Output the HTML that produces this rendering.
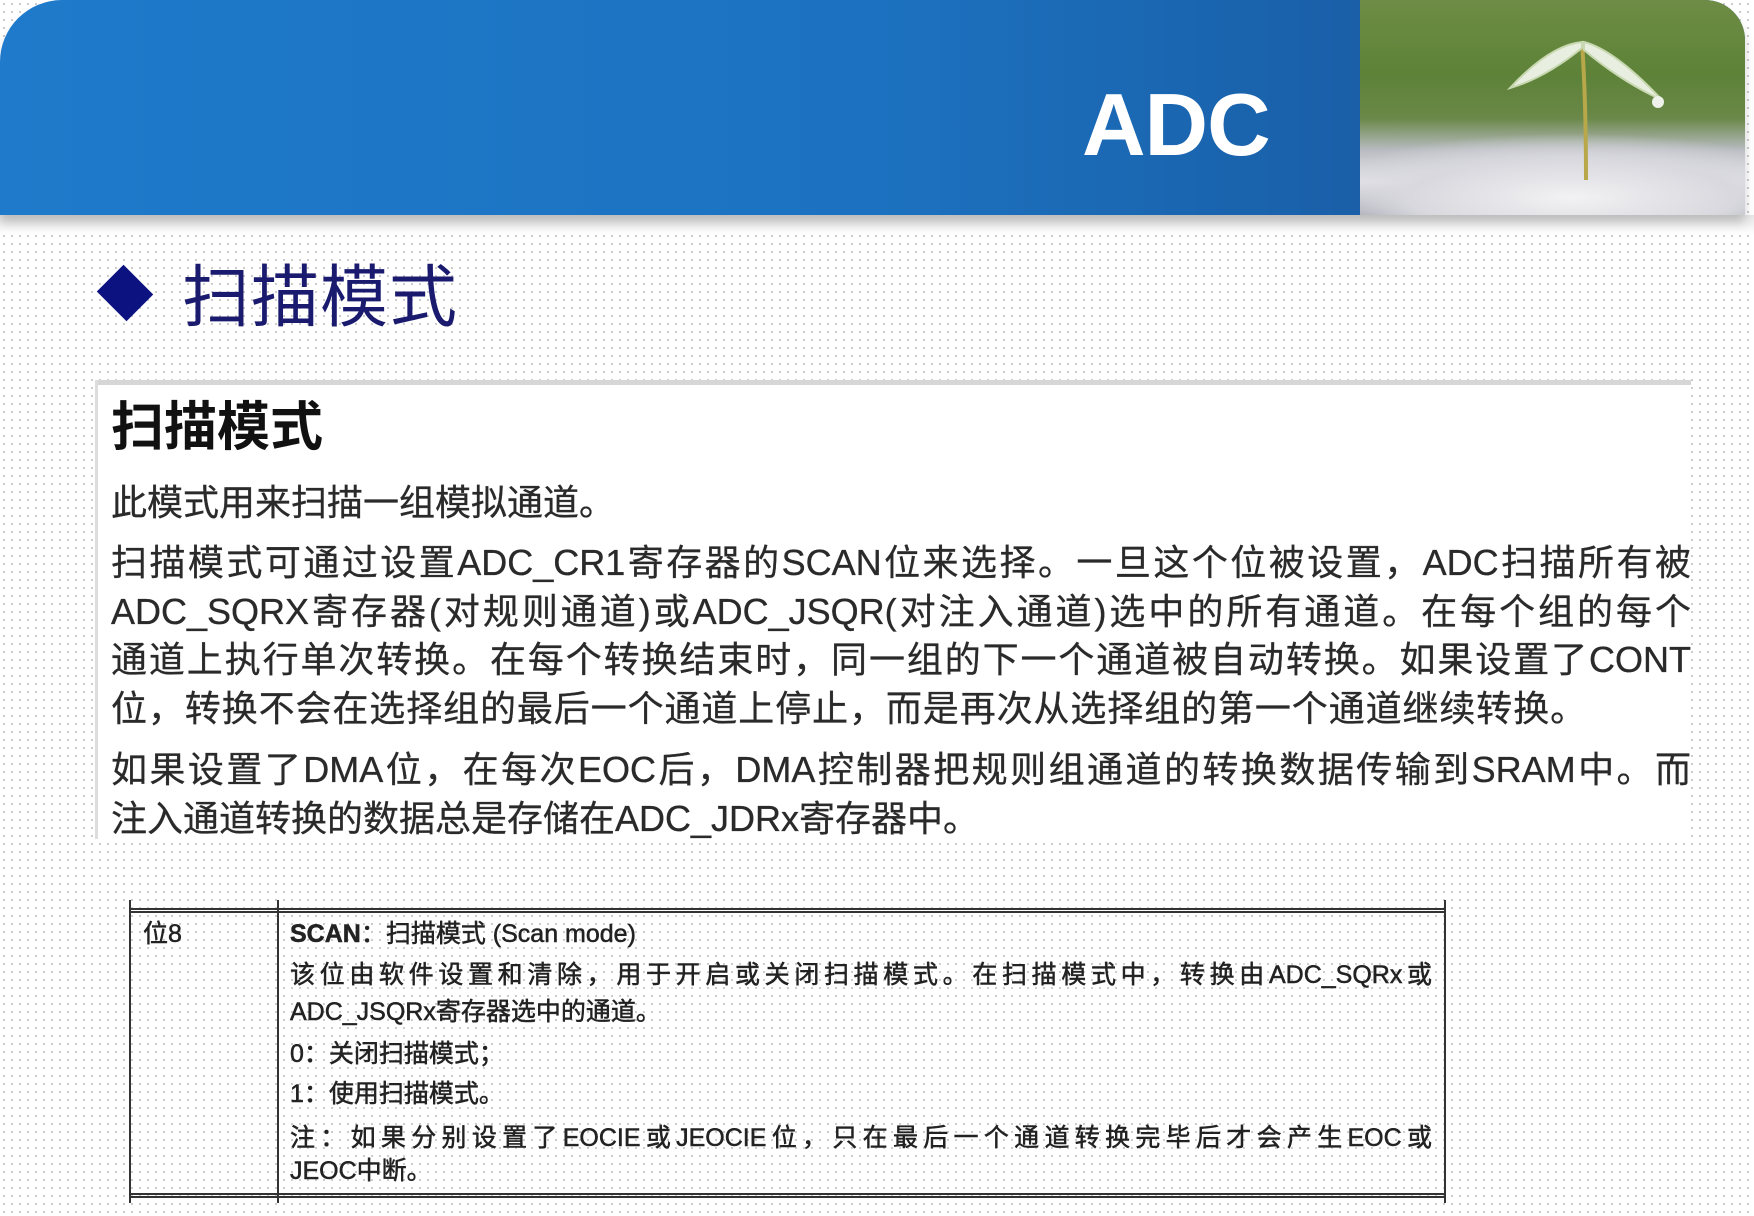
<!DOCTYPE html>
<html><head><meta charset="utf-8">
<style>
*{margin:0;padding:0;box-sizing:border-box}
body{width:1754px;height:1216px;overflow:hidden;position:relative;background:#fff;
 background-image:radial-gradient(circle,#c4c4c4 0.9px,transparent 1.2px);background-size:8px 8px;
 font-family:"Liberation Sans","Noto Sans CJK SC",sans-serif;}
.hdr{position:absolute;left:0;top:0;width:1745px;height:215px;border-radius:62px 40px 0 0;overflow:hidden;
 background:linear-gradient(90deg,#1f7acb 0%,#1c72c0 50%,#1a5fa8 78%,#1b5ea6 100%);box-shadow:0 8px 10px rgba(0,0,0,.18)}
.hdrwhite{position:absolute;left:0;top:215px;width:1754px;height:20px;background:linear-gradient(#e6e6e6,#fff)}
.pic{position:absolute;left:1360px;top:0;width:385px;height:215px;
 background:radial-gradient(ellipse 70% 30% at 55% 92%,#f2f2f4 0%,#d8d8de 60%,transparent 100%),
 linear-gradient(180deg,#6e8c45 0%,#5d8238 35%,#6a8848 55%,#b9bcc2 70%,#e6e6ea 85%,#9a9aa8 100%)}
.pic svg{position:absolute;left:0;top:0}
.adc{position:absolute;left:1082px;top:74px;color:#fff;font-weight:bold;font-size:88px;letter-spacing:-1px}
.dia{position:absolute;left:104px;top:272px;width:42px;height:42px;background:#0c1280;transform:rotate(45deg) scaleY(0.9)}
.t1{position:absolute;left:182px;top:258px;font-size:68px;color:#1a1a6e;letter-spacing:1px;line-height:80px}
.box{position:absolute;left:98px;top:380px;width:1593px;height:459px;background:#fff;border-top:5px solid #d6d6d6;box-shadow:-3px 0 0 #ddd}
.h2{position:absolute;left:111px;top:398px;font-size:53px;font-weight:bold;color:#111;line-height:60px}
.ln{position:absolute;left:111px;width:1580px;font-size:36px;color:#2a2a2a;line-height:44px;white-space:nowrap;-webkit-text-stroke:0.3px #2a2a2a}
.j{text-align:justify;text-align-last:justify}
.tb{position:absolute;left:129px;top:900px;width:1317px;height:303px}
.tb .tl{position:absolute;left:0;right:0;top:8px;height:5px;border-top:2px solid #333;border-bottom:2px solid #333}
.tb .bl{position:absolute;left:0;right:0;top:293px;height:5px;border-top:2px solid #333;border-bottom:2px solid #333}
.tb .v{position:absolute;top:0;bottom:0;width:2px;background:#333}
.tt{position:absolute;font-size:25px;color:#222;white-space:nowrap;line-height:30px;-webkit-text-stroke:0.5px #222}
</style></head><body>
<div class="hdrwhite"></div>
<div class="hdr"><div class="pic">
<svg width="385" height="215" viewBox="0 0 385 215">
<path d="M222 42 Q226 100 226 180" stroke="#b8a84a" stroke-width="4" fill="none"/>
<path d="M222 42 Q190 45 150 88 Q185 78 222 48 Z" fill="#e8eee0" stroke="#c8d8b0" stroke-width="2"/>
<path d="M224 42 Q255 50 302 100 Q262 82 224 50 Z" fill="#e8eee0" stroke="#c8d8b0" stroke-width="2"/>
<circle cx="298" cy="102" r="6" fill="#eef2ea"/>
</svg></div></div>
<div class="adc">ADC</div>
<div class="dia"></div>
<div class="t1">扫描模式</div>
<div class="box"></div>
<div class="h2">扫描模式</div>
<div class="ln" style="top:481px">此模式用来扫描一组模拟通道。</div>
<div class="ln j" style="top:541px">扫描模式可通过设置ADC_CR1寄存器的SCAN位来选择。一旦这个位被设置，ADC扫描所有被</div>
<div class="ln j" style="top:590px">ADC_SQRX寄存器(对规则通道)或ADC_JSQR(对注入通道)选中的所有通道。在每个组的每个</div>
<div class="ln j" style="top:638px">通道上执行单次转换。在每个转换结束时，同一组的下一个通道被自动转换。如果设置了CONT</div>
<div class="ln" style="top:687px;letter-spacing:0.9px">位，转换不会在选择组的最后一个通道上停止，而是再次从选择组的第一个通道继续转换。</div>
<div class="ln j" style="top:748px">如果设置了DMA位，在每次EOC后，DMA控制器把规则组通道的转换数据传输到SRAM中。而</div>
<div class="ln" style="top:797px">注入通道转换的数据总是存储在ADC_JDRx寄存器中。</div>
<div class="tb">
 <div class="tl"></div><div class="bl"></div>
 <div class="v" style="left:0"></div><div class="v" style="left:148px"></div><div class="v" style="right:0"></div>
</div>
<div class="tt" style="left:143px;top:919px">位8</div>
<div class="tt" style="left:290px;top:919px"><b>SCAN</b>：扫描模式 (Scan mode)</div>
<div class="tt" style="left:290px;top:960px;width:1142px;text-align:justify;text-align-last:justify">该位由软件设置和清除，用于开启或关闭扫描模式。在扫描模式中，转换由ADC_SQRx或</div>
<div class="tt" style="left:290px;top:997px">ADC_JSQRx寄存器选中的通道。</div>
<div class="tt" style="left:290px;top:1039px">0：关闭扫描模式；</div>
<div class="tt" style="left:290px;top:1079px">1：使用扫描模式。</div>
<div class="tt" style="left:290px;top:1123px;width:1142px;text-align:justify;text-align-last:justify">注：如果分别设置了EOCIE或JEOCIE位，只在最后一个通道转换完毕后才会产生EOC或</div>
<div class="tt" style="left:290px;top:1156px">JEOC中断。</div>
</body></html>
